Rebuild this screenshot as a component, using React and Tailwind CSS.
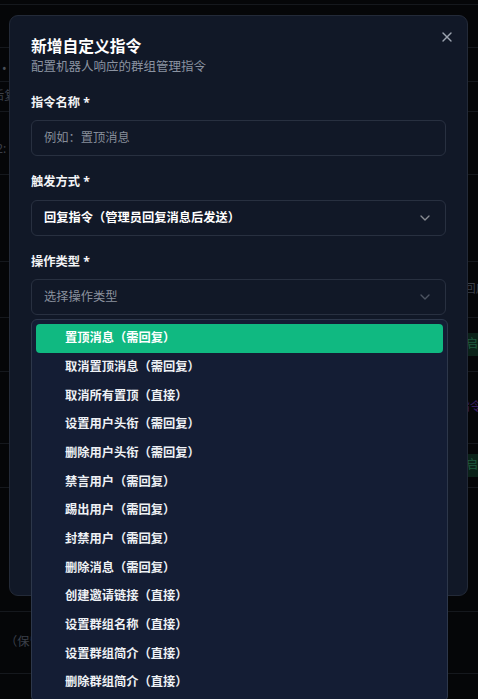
import { ChevronDown, X } from "lucide-react";

const actions = [
  "置顶消息（需回复）",
  "取消置顶消息（需回复）",
  "取消所有置顶（直接）",
  "设置用户头衔（需回复）",
  "删除用户头衔（需回复）",
  "禁言用户（需回复）",
  "踢出用户（需回复）",
  "封禁用户（需回复）",
  "删除消息（需回复）",
  "创建邀请链接（直接）",
  "设置群组名称（直接）",
  "设置群组简介（直接）",
  "删除群组简介（直接）",
];

// dimmed page behind the dialog
function BackgroundPage() {
  return (
    <div className="flex flex-col text-[12.25px] text-[#3a3f48]">
      <div className="h-[5px] border-b border-[#15181d]" />
      <div className="h-[43px] border-b border-[#15181d]" />
      <div className="h-[34px] border-b border-[#15181d] pl-[2px] pt-[12px] text-[#4a4f58]">•</div>
      <div className="h-[30px] border-b border-[#15181d] pt-[5px] -ml-[8px]">后复</div>
      <div className="h-[63px] border-b border-[#15181d] pt-[28px] -ml-[4px]">2:</div>
      <div className="h-[87px] border-b border-[#15181d]" />
      <div className="flex h-[56px] items-center justify-end border-b border-[#15181d]">
        <span className="-mr-[10px]">回应</span>
      </div>
      <div className="flex h-[54px] items-center justify-end border-b border-[#15181d]">
        <span className="-mr-[6px] rounded bg-[#0b2219] px-1.5 py-[2px] text-[#1f5a3f]">已启</span>
      </div>
      <div className="flex h-[72px] items-center justify-end border-b border-[#15181d]">
        <span className="-mr-[4px] text-[#3a1f63]">指令</span>
      </div>
      <div className="flex h-[44px] items-center justify-end border-b border-[#15181d]">
        <span className="-mr-[6px] rounded bg-[#0b2219] px-1.5 py-[2px] text-[#1f5a3f]">已启</span>
      </div>
      <div className="h-[124px] border-b border-[#15181d]" />
      <div className="flex h-[62px] items-center border-b border-[#15181d] pl-[5px]">（保留</div>
    </div>
  );
}

export default function App() {
  return (
    <div
      className="relative h-[699px] w-full overflow-hidden bg-[#050608]"
      style={{ fontFamily: '"Noto Sans", "Noto Sans CJK SC", sans-serif' }}
    >
      <BackgroundPage />

      {/* Dialog */}
      <div className="absolute left-[9px] top-[15px] h-[581px] w-[459px] rounded-[9px] border border-[#232a38] bg-[#111827] px-[21px] pt-[21px]">
        <button className="absolute right-[12px] top-[13px] text-[#9ca3af]">
          <X size={16} strokeWidth={2} />
        </button>

        <h2 className="text-[15.75px] font-bold leading-[18px] text-white">新增自定义指令</h2>
        <p className="mt-[5px] text-[12.5px] leading-[14px] text-[#8b93a1]">配置机器人响应的群组管理指令</p>

        <label className="mt-[22px] block text-[12.25px] font-bold leading-[14px] text-[#f3f4f6]">指令名称 *</label>
        <div className="mt-[10px] flex h-9 items-center rounded-md border border-[#283040] px-3 text-[12.25px] text-[#868d99]">
          例如：置顶消息
        </div>

        <label className="mt-[19px] block text-[12.25px] font-bold leading-[14px] text-[#f3f4f6]">触发方式 *</label>
        <div className="mt-[11px] flex h-9 items-center justify-between rounded-md border border-[#283040] px-3 text-[12.25px] font-semibold text-white">
          <span>回复指令（管理员回复消息后发送）</span>
          <ChevronDown size={16} className="opacity-50" />
        </div>

        <label className="mt-[19px] block text-[12.25px] font-bold leading-[14px] text-[#f3f4f6]">操作类型 *</label>
        <div className="mt-[10px] flex h-9 items-center justify-between rounded-md border border-[#283040] px-3 text-[12.25px] text-[#8a919e]">
          <span>选择操作类型</span>
          <ChevronDown size={16} className="opacity-50" />
        </div>
      </div>

      {/* Select dropdown */}
      <div className="absolute left-[31px] top-[319px] w-[417px] rounded-md border border-[#2d374a] bg-[#141d34] p-1">
        {actions.map((a, i) => (
          <div
            key={a}
            className={`flex h-[28.7px] items-center rounded-[4px] pl-[29px] text-[12.25px] font-semibold ${
              i === 0 ? "bg-[#10b981] text-white" : "text-[#eef1f5]"
            }`}
          >
            {a}
          </div>
        ))}
      </div>
    </div>
  );
}
